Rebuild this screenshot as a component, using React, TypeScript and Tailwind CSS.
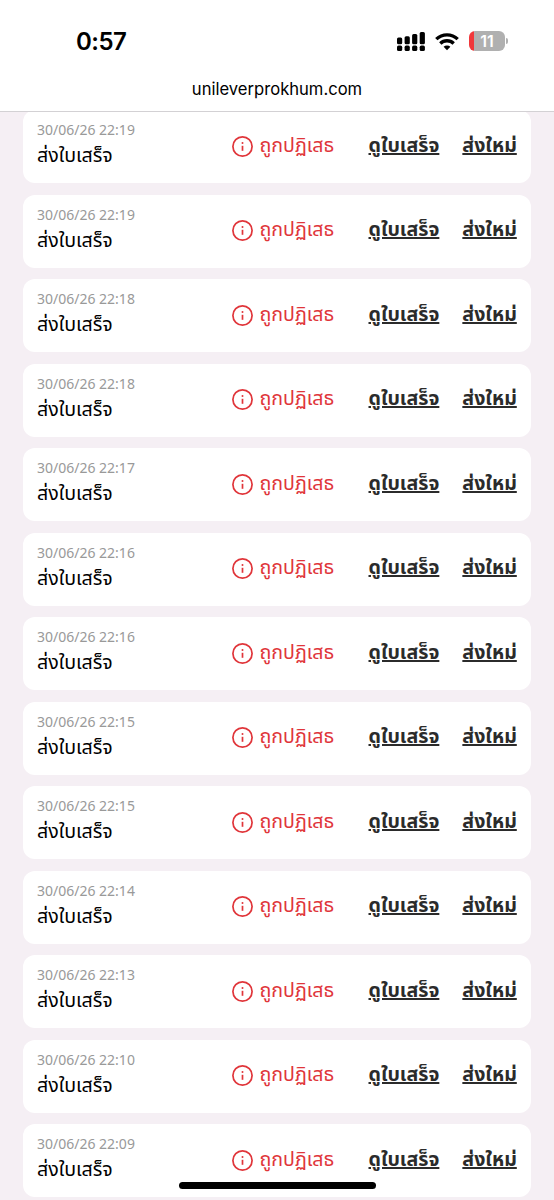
interface Receipt {
  id: number;
  date: string;
}

const receipts: Receipt[] = [
  { id: 1, date: '30/06/26 22:19' },
  { id: 2, date: '30/06/26 22:19' },
  { id: 3, date: '30/06/26 22:18' },
  { id: 4, date: '30/06/26 22:18' },
  { id: 5, date: '30/06/26 22:17' },
  { id: 6, date: '30/06/26 22:16' },
  { id: 7, date: '30/06/26 22:16' },
  { id: 8, date: '30/06/26 22:15' },
  { id: 9, date: '30/06/26 22:15' },
  { id: 10, date: '30/06/26 22:14' },
  { id: 11, date: '30/06/26 22:13' },
  { id: 12, date: '30/06/26 22:10' },
  { id: 13, date: '30/06/26 22:09' },
];

// Dual SIM signal: bars on top, dots for the second line below
const SignalIcon = () => (
  <svg className="h-5 w-7" viewBox="0 0 28 20" fill="#000">
    <rect x="0" y="5.6" width="5.2" height="6.6" rx="1.5" />
    <rect x="7.6" y="4.2" width="5.2" height="8" rx="1.5" />
    <rect x="15.1" y="2" width="5.2" height="10.2" rx="1.5" />
    <rect x="22.7" y="0" width="5.2" height="12.2" rx="1.5" />
    <rect x="0" y="13.6" width="5.2" height="5.4" rx="1.6" />
    <rect x="7.6" y="13.6" width="5.2" height="5.4" rx="1.6" />
    <rect x="15.1" y="13.6" width="5.2" height="5.4" rx="1.6" />
    <rect x="22.7" y="13.6" width="5.2" height="5.4" rx="1.6" />
  </svg>
);

const WifiIcon = () => (
  <svg className="h-[18px] w-6" viewBox="0 0 24 18" fill="none" stroke="#000" strokeWidth="3.3">
    <path d="M1.3 6.2a15.2 15.2 0 0 1 21.4 0" />
    <path d="M5.3 10.5a9.5 9.5 0 0 1 13.4 0" />
    <path d="M12 17.2l-3.4-3.4a4.8 4.8 0 0 1 6.8 0z" fill="#000" stroke="none" />
  </svg>
);

const BatteryIcon = () => (
  <div className="-mt-px flex items-center gap-px">
    <div className="flex h-5 w-9 items-center justify-center rounded-md bg-linear-to-r from-[#f0383b] from-13% to-[#b0b0b0] to-13% text-base leading-5 font-semibold text-white">
      11
    </div>
    <div className="h-1.5 w-0.5 rounded-r-full bg-[#b0b0b0]" />
  </div>
);

const InfoIcon = () => (
  <svg className="mt-px size-[21px] shrink-0" viewBox="0 0 21 21" fill="none" stroke="#e0353a" strokeWidth="1.7">
    <circle cx="10.5" cy="10.5" r="9.6" />
    <path d="M10.5 9.8v5" />
    <circle cx="10.5" cy="7.1" r="1" fill="#e0353a" stroke="none" />
  </svg>
);

const ReceiptCard = ({ receipt }: { receipt: Receipt }) => (
  <article className="flex h-[73px] shrink-0 rounded-xl bg-white pl-3.5">
    <div className="w-[195px] pt-2.5">
      <p className="text-sm leading-5 text-[#999]">{receipt.date}</p>
      <p className="text-[19.6px] leading-[30px] text-black">ส่งใบเสร็จ</p>
    </div>
    <div className="flex h-[71px] w-[136.5px] items-center gap-[6.5px]">
      <InfoIcon />
      <span className="pb-0.5 text-[19.6px] leading-[30px] text-[#e0353a]">ถูกปฏิเสธ</span>
    </div>
    <div className="flex h-[69px] items-center gap-[23px] text-[19.6px] leading-[30px] font-bold text-[#2b2b2b]">
      <a href="#" className="underline decoration-[1.5px]">
        ดูใบเสร็จ
      </a>
      <a href="#" className="underline decoration-[1.5px]">
        ส่งใหม่
      </a>
    </div>
  </article>
);

export default function App() {
  return (
    <div className="flex h-[1200px] w-[554px] flex-col overflow-hidden bg-[#f5eff4] font-['Noto_Sans','Noto_Sans_Thai',sans-serif]">
      <header className="h-28 shrink-0 border-b border-[#d3d1d4] bg-white font-['Inter',sans-serif] text-black">
        <div className="flex h-[76px] items-center pt-[7px] pl-[76px]">
          <time className="w-[321px] text-2xl leading-6 font-semibold tracking-[-0.5px]">0:57</time>
          <div className="flex items-center">
            <SignalIcon />
            <span className="w-[10px]" />
            <WifiIcon />
            <span className="w-[10px]" />
            <BatteryIcon />
          </div>
        </div>
        <p className="pt-px text-center text-[16.6px] leading-6">unileverprokhum.com</p>
      </header>

      <main className="min-h-0 flex-1 overflow-hidden px-[23px]">
        <div className="-mt-0.5 flex flex-col gap-[11.5px]">
          {receipts.map((receipt) => (
            <ReceiptCard key={receipt.id} receipt={receipt} />
          ))}
        </div>
      </main>

      {/* Home indicator */}
      <div className="absolute top-[1182px] left-[179px] h-[7px] w-[197px] rounded-full bg-black" />
    </div>
  );
}
